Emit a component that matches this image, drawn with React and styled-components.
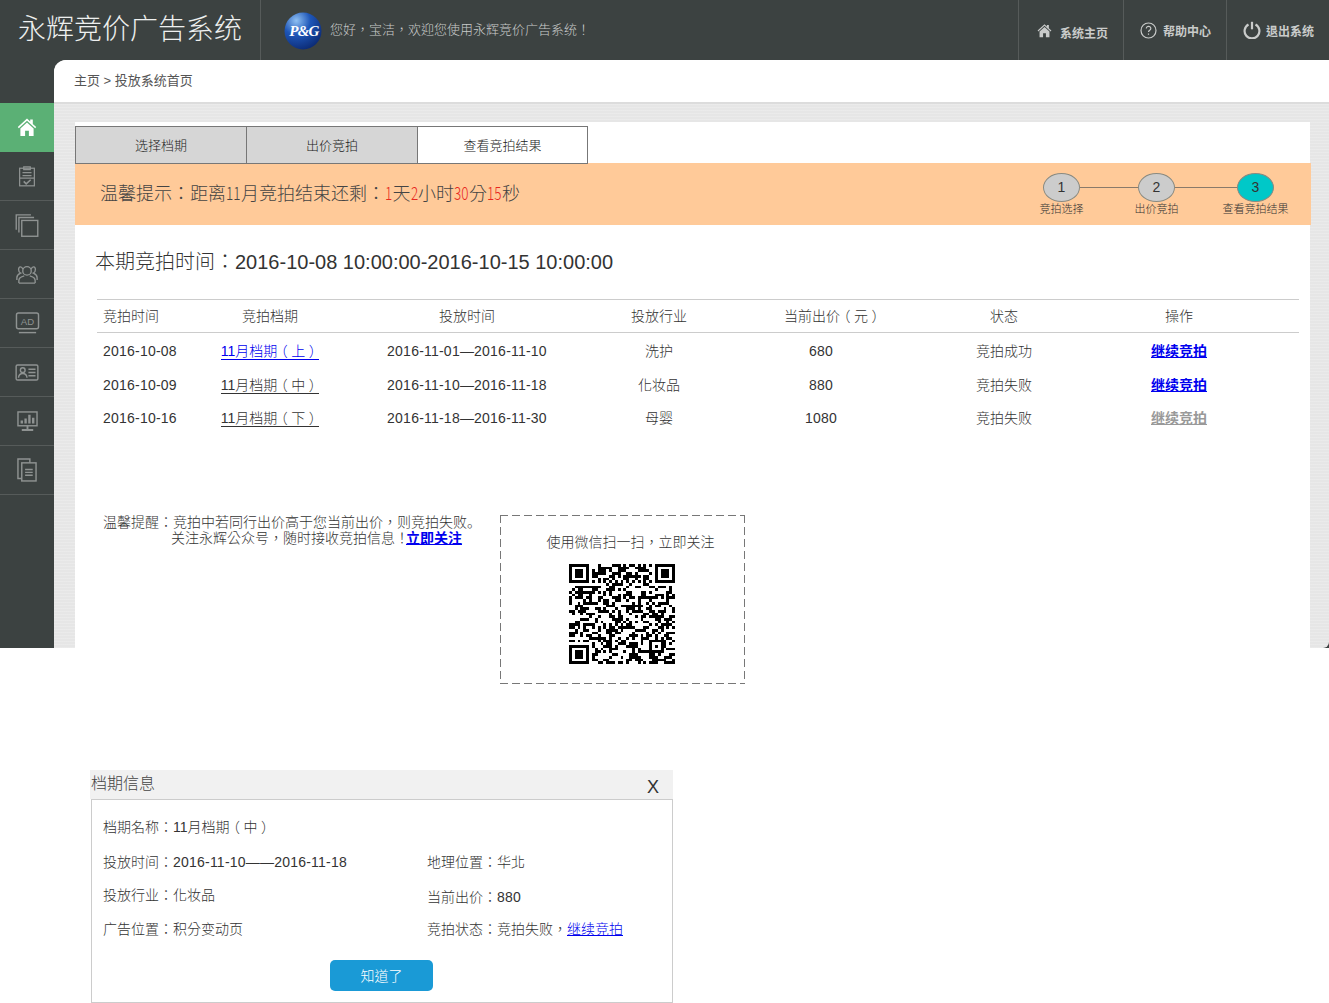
import React from "react";
import styled, { createGlobalStyle } from "styled-components";

const cjk = `"Liberation Sans", "Noto Sans CJK TC", "Noto Sans CJK SC", sans-serif`;

const GlobalStyle = createGlobalStyle`
  html, body {
    margin: 0;
    padding: 0;
    background: #fff;
  }
  body {
    font-family: ${cjk};
    font-size: 14px;
    font-weight: 300;
    color: #333;
  }
  * {
    box-sizing: border-box;
  }
`;

const Page = styled.div`
  width: 1329px;
  height: 1003px;
  overflow: hidden;
`;

const Shell = styled.div`
  height: 648px;
  background: #3c4241;
  display: flex;
  flex-direction: column;
`;

const Header = styled.header`
  height: 60px;
  flex: none;
  display: flex;
  align-items: stretch;
  color: #d4d6d5;
`;

const Brand = styled.div`
  width: 261px;
  padding-left: 18px;
  font-size: 28px;
  line-height: 59px;
  color: #eef0ef;
  border-right: 1px solid #565b5a;
`;

const Welcome = styled.div`
  flex: 1;
  display: flex;
  align-items: center;
  gap: 8px;
  padding: 2px 0 0 23px;
  font-size: 13px;
  color: #c9cbca;
`;

const WelcomeText = styled.span`
  margin-top: -5px;
`;

const HeaderLink = styled.a`
  width: ${(p) => p.$w}px;
  display: flex;
  align-items: center;
  gap: ${(p) => p.$gap}px;
  padding-left: ${(p) => p.$pad}px;
  border-left: 1px solid #565b5a;
  font-size: 12px;
  font-weight: 700;
  color: #c9cbca;
  span {
    position: relative;
    top: ${(p) => p.$drop || 0}px;
  }
`;

const Body = styled.div`
  flex: 1;
  display: flex;
  min-height: 0;
`;

const Sidebar = styled.nav`
  width: 54px;
  flex: none;
  padding-top: 43px;
`;

const SideItem = styled.div`
  height: 49px;
  display: flex;
  align-items: center;
  justify-content: center;
  background: ${(p) => (p.$active ? "#5bb075" : "transparent")};
  border-bottom: 1px solid ${(p) => (p.$active ? "#5bb075" : "#565b5a")};
  color: ${(p) => (p.$active ? "#fff" : "#8f9392")};
`;

const Main = styled.main`
  flex: 1;
  display: flex;
  flex-direction: column;
  min-width: 0;
  border-radius: 12px 0 6px 0;
  background-color: #e6e6e6;
  background-image: repeating-linear-gradient(0deg, rgba(255, 255, 255, 0.18) 0 1px, transparent 1px 3px);
`;

const Crumb = styled.div`
  height: 44px;
  flex: none;
  padding-left: 20px;
  background: #fff;
  border-radius: 12px 0 0 0;
  border-bottom: 2px solid #dcdcdc;
  font-size: 13px;
  line-height: 41px;
  color: #555;
  font-weight: 400;
`;

const Card = styled.section`
  flex: 1;
  margin: 18px 19px 0 21px;
  padding-top: 4px;
  background: #fff;
`;

const Tabs = styled.div`
  display: flex;
  position: relative;
  z-index: 1;
`;

const Tab = styled.div`
  width: 171px;
  height: 38px;
  background: ${(p) => (p.$active ? "#fff" : "#d6d6d6")};
  border: 1px solid #777;
  border-right-width: ${(p) => (p.$active ? 1 : 0)}px;
  text-align: center;
  font-size: 13px;
  line-height: 38px;
  color: #222;
`;

const Banner = styled.div`
  height: 62px;
  margin-top: -1px;
  margin-right: -1px;
  padding: 0 22px 0 25px;
  background: #ffca99;
  display: flex;
  align-items: center;
  justify-content: space-between;
`;

const Countdown = styled.div`
  font-size: 18px;
  color: #444;
  position: relative;
  top: -2px;
`;

// the digits in this line are much narrower than the font's own
const Digits = styled.span`
  display: inline-block;
  width: ${(p) => p.children.length * 7.5}px;
  transform: scaleX(0.75);
  transform-origin: left center;
  font-family: "Noto Sans CJK TC", sans-serif;
  color: ${(p) => (p.$red ? "#e8281e" : "inherit")};
`;

const Steps = styled.div`
  display: grid;
  grid-template-columns: 37px 58px 37px 62px 37px;
  grid-template-rows: 29px 14px;
  margin-right: 15px;
`;

const StepDot = styled.div`
  border: 1px solid #8a8a80;
  border-radius: 50%;
  background: ${(p) => (p.$on ? "#00c8c8" : "#ccc")};
  text-align: center;
  font-size: 14px;
  line-height: 27px;
  color: #333;
`;

const StepLine = styled.div`
  height: 1px;
  align-self: center;
  background: #8a7a6a;
`;

const StepLabel = styled.div`
  grid-row: 2;
  grid-column: ${(p) => p.$col};
  justify-self: center;
  white-space: nowrap;
  font-size: 11px;
  line-height: 14px;
  color: #333;
`;

const Content = styled.div`
  padding: 0 11px 0 20px;
`;

const PeriodTitle = styled.h2`
  margin: 23px 0 23px;
  font-size: 20px;
  font-weight: 300;
  line-height: 28px;
  color: #333;
`;

const Table = styled.div`
  margin-left: 2px;
  border-top: 1px solid #ccc;
`;

const Row = styled.div`
  display: grid;
  grid-template-columns: 73px 200px 194px 190px 158px 184px 166px 37px;
  align-items: center;
  height: ${(p) => (p.$head ? "33px" : "100%")};
  border-bottom: ${(p) => (p.$head ? "1px solid #ccc" : "none")};
  text-align: center;
  font-size: 14px;
  color: #333;
`;

const Cell = styled.div`
  white-space: nowrap;
  padding-bottom: ${(p) => (p.$up ? 2 : 0)}px;
  ${(p) => p.$left && "grid-column: 1; padding-left: 6px; text-align: left;"}
  ${(p) => p.$shift && "padding-right: 24px;"}
`;

const Rows = styled.div`
  display: grid;
  grid-template-rows: 34px 34px 32px;
  padding-top: 1px;
`;

const Num = styled.span`
  letter-spacing: 0.22px;
`;

// full-width brackets sit centred in their em box in the reference:
// halt gives the half-width glyph, the padding fills the rest of the em
const Bracket = styled.span`
  font-feature-settings: "halt";
  padding: 0 3.5px;
`;

const SlotLink = styled.a`
  color: ${(p) => p.$color};
  border-bottom: 1px solid ${(p) => p.$color};
`;

const PlainLink = styled.a`
  color: #0000ee;
  text-decoration: underline;
`;

const ActionLink = styled.a`
  color: ${(p) => (p.$off ? "#999" : "#0000ee")};
  font-weight: 700;
  text-decoration: underline;
`;

const Bottom = styled.div`
  display: flex;
  align-items: flex-start;
  margin-top: 81px;
`;

const Reminder = styled.div`
  width: 405px;
  margin-top: -2px;
  padding: 0 0 0 8px;
  line-height: 16px;
  font-size: 14px;
  color: #333;
  p {
    margin: 0;
  }
  p + p {
    padding-left: 68px;
  }
  a {
    margin-left: -3px;
    color: #0000ee;
    font-weight: 700;
    text-decoration: underline;
  }
`;

const FullStop = styled.span`
  font-family: "Noto Sans CJK SC", sans-serif;
`;

const QrBox = styled.div`
  width: 245px;
  height: 169px;
  padding-top: 18px;
  font-size: 14px;
  line-height: 18px;
  color: #333;
  text-align: center;
  background:
    linear-gradient(90deg, #777 8px, transparent 8px) top left / 12px 1px repeat-x,
    linear-gradient(90deg, #777 8px, transparent 8px) bottom left / 12px 1px repeat-x,
    linear-gradient(180deg, #777 8px, transparent 8px) top left / 1px 12px repeat-y,
    linear-gradient(180deg, #777 8px, transparent 8px) top right / 1px 12px repeat-y;
`;

const QrTitle = styled.div`
  padding-left: 16px;
`;

const QrImage = styled.svg`
  display: block;
  width: 106px;
  height: 100px;
  margin: 13px 0 0 69px;
  shape-rendering: crispEdges;
`;

const Dialog = styled.section`
  margin: 122px 0 0 90px;
  width: 583px;
`;

const DialogBar = styled.div`
  height: 29px;
  background: #f1f1f1;
  display: flex;
  justify-content: space-between;
  padding: 0 14px 0 1px;
  font-size: 16px;
  line-height: 27px;
  color: #444;
`;

const CloseMark = styled.span`
  font-size: 18px;
  line-height: 34px;
  color: #333;
`;

const DialogBody = styled.div`
  height: 204px;
  margin-left: 1px;
  border: 1px solid #ccc;
  padding: 9px 10px 0 11px;
`;

const InfoGrid = styled.div`
  display: grid;
  grid-template-columns: 324px 1fr;
  grid-template-rows: 34px 35px 32px 35px;
  align-items: center;
  font-size: 14px;
  color: #333;
`;

const InfoCell = styled.div`
  white-space: nowrap;
  position: relative;
  top: ${(p) => p.$nudge || 0}px;
`;

const OkButton = styled.button`
  display: block;
  width: 103px;
  height: 31px;
  margin: 15px 0 0 227px;
  padding: 0 0 2px;
  border: none;
  border-radius: 5px;
  background: #1a9ad6;
  color: #fff;
  font-family: inherit;
  font-weight: 300;
  font-size: 14px;
`;

const Line = { fill: "none", stroke: "currentColor", strokeWidth: 1.5 };

const HomeIcon = ({ size = 20 }) => (
  <svg width={size} height={size} viewBox="0 0 20 20" fill="currentColor">
    <path d="M10 1.5 0.8 10l1 1.2L10 3.7l8.2 7.5 1-1.2-3.4-3.1V2.5h-2.6v2z" />
    <path d="M10 5.4 3.4 11.4V19h4.7v-5.2h3.8V19h4.7v-7.6z" />
  </svg>
);

const ClipboardIcon = () => (
  <svg width="18" height="24" viewBox="0 0 22 26" {...Line}>
    <rect x="2" y="3.5" width="18" height="21.5" />
    <path d="M7 3.5V1.8h8v1.7M7 3.5v1.6h8V3.5M5.5 9h11M5.5 12.5h11M2 15.5h18" />
    <path d="M7 19.6l3 3 5.5-5" strokeWidth="2" />
  </svg>
);

const CopiesIcon = () => (
  <svg width="24" height="23" viewBox="0 0 25 25" {...Line}>
    <path d="M.8 17V1h16" />
    <path d="M3.7 20V3.8h16.5" />
    <rect x="6.8" y="7" width="17.4" height="17.2" />
  </svg>
);

const UsersIcon = () => (
  <svg width="22" height="19" viewBox="0 0 24 21" {...Line}>
    <circle cx="12" cy="6.5" r="4.7" />
    <path d="M3 20v-3c0-3 4-4.5 6-5M21 20v-3c0-3-4-4.5-6-5M3 20h18" />
    <path d="M7.5 4.6C6 1 2.8 1.5 2.7 5c0 2 1 3.5 2.3 4C3 10 .8 11 .8 14v2.5" />
    <path d="M16.5 4.6C18 1 21.2 1.5 21.3 5c0 2-1 3.5-2.3 4 2 1 4.2 2 4.2 5v2.5" />
  </svg>
);

const AdIcon = () => (
  <svg width="25" height="23" viewBox="0 0 25 24" {...Line}>
    <rect x="1" y="1" width="23" height="16.5" rx="2" />
    <path d="M3.5 21.5h18" />
    <text x="12.5" y="13.3" textAnchor="middle" fontSize="10" fill="currentColor" stroke="none" fontFamily="Liberation Sans">AD</text>
  </svg>
);

const CardIcon = () => (
  <svg width="24" height="17" viewBox="0 0 25 18" {...Line}>
    <rect x="1" y="1" width="23" height="16" rx="1.5" />
    <circle cx="8" cy="6.5" r="2.5" />
    <path d="M3.5 14.5c.3-3.5 2-4.5 4.5-4.5s4.2 1 4.5 4.5M14 5.5h7.5M14 9h7.5M14 12.5h7.5" />
  </svg>
);

const ChartIcon = () => (
  <svg width="21" height="20" viewBox="0 0 22 21" fill="none" stroke="currentColor" strokeWidth="1.5">
    <rect x="1" y="1" width="20" height="14.5" />
    <path d="M8 20h6M11 15.5V20M5 20h12" strokeWidth="2" />
    <path d="M5 13v-3M9 13V8M13 13V4M17 13V7" strokeWidth="2.5" />
  </svg>
);

const FilesIcon = () => (
  <svg width="20" height="24" viewBox="0 0 21 25" {...Line}>
    <path d="M5 21.5H1V1h12.5v4" />
    <rect x="5" y="5" width="15" height="19" />
    <path d="M8.5 12h8M8.5 15h8M8.5 18h8" />
  </svg>
);

const PgLogo = () => (
  <svg width="38" height="38" viewBox="0 0 38 38">
    <defs>
      <radialGradient id="pgBall" cx="0.32" cy="0.22" r="0.95">
        <stop offset="0" stopColor="#8fc0f2" />
        <stop offset="0.4" stopColor="#1e56b8" />
        <stop offset="1" stopColor="#071f63" />
      </radialGradient>
    </defs>
    <circle cx="19" cy="19" r="18.5" fill="url(#pgBall)" />
    <text x="20" y="24" textAnchor="middle" fontSize="15" fontWeight="700" fontStyle="italic" fontFamily="Liberation Serif" letterSpacing="-0.8" fill="#fff">P&amp;G</text>
  </svg>
);

// version 5 sized code: fixed patterns are real, the data modules are filler
const QR_SIZE = 37;

const buildQr = () => {
  let seed = 20161008;
  const next = () => {
    seed = (seed * 1664525 + 1013904223) >>> 0;
    return seed >>> 16;
  };
  const grid = [];
  for (let y = 0; y < QR_SIZE; y++) {
    const row = [];
    for (let x = 0; x < QR_SIZE; x++) {
      row.push(next() % 100 < 48);
    }
    grid.push(row);
  }
  // timing lines
  for (let i = 8; i < QR_SIZE - 8; i++) {
    grid[6][i] = i % 2 === 0;
    grid[i][6] = i % 2 === 0;
  }
  const finder = (ox, oy) => {
    for (let y = -1; y <= 7; y++) {
      for (let x = -1; x <= 7; x++) {
        const cy = oy + y;
        const cx = ox + x;
        if (cy < 0 || cx < 0 || cy >= QR_SIZE || cx >= QR_SIZE) continue;
        const inside = x >= 0 && x <= 6 && y >= 0 && y <= 6;
        const ring = x === 0 || x === 6 || y === 0 || y === 6;
        const core = x >= 2 && x <= 4 && y >= 2 && y <= 4;
        grid[cy][cx] = inside && (ring || core);
      }
    }
  };
  finder(0, 0);
  finder(QR_SIZE - 7, 0);
  finder(0, QR_SIZE - 7);
  for (let y = -2; y <= 2; y++) {
    for (let x = -2; x <= 2; x++) {
      grid[30 + y][30 + x] = Math.max(Math.abs(x), Math.abs(y)) !== 1;
    }
  }
  return grid;
};

const qrGrid = buildQr();

const QrCode = () => (
  <QrImage viewBox={`0 0 ${QR_SIZE} ${QR_SIZE}`} preserveAspectRatio="none">
    {qrGrid.flatMap((row, y) =>
      row.map((on, x) => (on ? <rect key={`${x}-${y}`} x={x} y={y} width="1" height="1" fill="#000" /> : null))
    )}
  </QrImage>
);

const Paren = ({ children }) => (
  <>
    <Bracket>（</Bracket>
    {children}
    <Bracket>）</Bracket>
  </>
);

const sideIcons = [ClipboardIcon, CopiesIcon, UsersIcon, AdIcon, CardIcon, ChartIcon, FilesIcon];

const bids = [
  { date: "2016-10-08", slot: "上", color: "#0000ee", span: "2016-11-01—2016-11-10", trade: "洗护", price: "680", state: "竞拍成功" },
  { date: "2016-10-09", slot: "中", color: "#333", span: "2016-11-10—2016-11-18", trade: "化妆品", price: "880", state: "竞拍失败" },
  { date: "2016-10-16", slot: "下", color: "#333", span: "2016-11-18—2016-11-30", trade: "母婴", price: "1080", state: "竞拍失败", off: true },
];

export default function App() {
  return (
    <Page>
      <GlobalStyle />
      <Shell>
        <Header>
          <Brand>永辉竞价广告系统</Brand>
          <Welcome>
            <PgLogo />
            <WelcomeText>您好，宝洁，欢迎您使用永辉竞价广告系统！</WelcomeText>
          </Welcome>
          <HeaderLink $w={105} $pad={18} $gap={8} $drop={2}>
            <HomeIcon size={15} />
            <span>系统主页</span>
          </HeaderLink>
          <HeaderLink $w={103} $pad={16} $gap={6}>
            <svg width="17" height="17" viewBox="0 0 17 17" fill="none" stroke="currentColor" strokeWidth="1.2">
              <circle cx="8.5" cy="8.5" r="7.5" />
              <path d="M6.3 6.5c0-3 4.6-2.8 4.5 0 0 1.8-2.3 1.8-2.3 3.6" />
              <path d="M8.5 11.5v1.3" />
            </svg>
            <span>帮助中心</span>
          </HeaderLink>
          <HeaderLink $w={103} $pad={16} $gap={5}>
            <svg width="18" height="18" viewBox="0 0 18 18" fill="none" stroke="currentColor" strokeWidth="2.2">
              <path d="M5.5 3.5a7.4 7.4 0 1 0 7 0" />
              <path d="M9 .8v7.5" />
            </svg>
            <span>退出系统</span>
          </HeaderLink>
        </Header>
        <Body>
          <Sidebar>
            <SideItem $active>
              <HomeIcon />
            </SideItem>
            {sideIcons.map((Icon, i) => (
              <SideItem key={i}>
                <Icon />
              </SideItem>
            ))}
          </Sidebar>
          <Main>
            <Crumb>主页 &gt; 投放系统首页</Crumb>
            <Card>
              <Tabs>
                <Tab>选择档期</Tab>
                <Tab>出价竞拍</Tab>
                <Tab $active>查看竞拍结果</Tab>
              </Tabs>
              <Banner>
                <Countdown>
                  温馨提示：距离<Digits>11</Digits>月竞拍结束还剩：<Digits $red>1</Digits>天<Digits $red>2</Digits>小时
                  <Digits $red>30</Digits>分<Digits $red>15</Digits>秒
                </Countdown>
                <Steps>
                  <StepDot>1</StepDot>
                  <StepLine />
                  <StepDot>2</StepDot>
                  <StepLine />
                  <StepDot $on>3</StepDot>
                  <StepLabel $col={1}>竞拍选择</StepLabel>
                  <StepLabel $col={3}>出价竞拍</StepLabel>
                  <StepLabel $col={5}>查看竞拍结果</StepLabel>
                </Steps>
              </Banner>
              <Content>
                <PeriodTitle>本期竞拍时间：2016-10-08 10:00:00-2016-10-15 10:00:00</PeriodTitle>
                <Table>
                  <Row $head>
                    <Cell $left $up>竞拍时间</Cell>
                    <Cell $up>竞拍档期</Cell>
                    <Cell $up>投放时间</Cell>
                    <Cell $up>投放行业</Cell>
                    <Cell $up>当前出价<Paren>元</Paren></Cell>
                    <Cell $up>状态</Cell>
                    <Cell $up>操作</Cell>
                  </Row>
                  <Rows>
                    {bids.map((b) => (
                      <Row key={b.date}>
                        <Cell $left><Num>{b.date}</Num></Cell>
                        <Cell $up>
                          <SlotLink $color={b.color}>11月档期<Paren>{b.slot}</Paren></SlotLink>
                        </Cell>
                        <Cell><Num>{b.span}</Num></Cell>
                        <Cell $up>{b.trade}</Cell>
                        <Cell $shift><Num>{b.price}</Num></Cell>
                        <Cell $up>{b.state}</Cell>
                        <Cell $up>
                          <ActionLink $off={b.off}>继续竞拍</ActionLink>
                        </Cell>
                      </Row>
                    ))}
                  </Rows>
                </Table>
                <Bottom>
                  <Reminder>
                    <p>温馨提醒：竞拍中若同行出价高于您当前出价，则竞拍失败<FullStop>。</FullStop></p>
                    <p>
                      关注永辉公众号，随时接收竞拍信息！<a>立即关注</a>
                    </p>
                  </Reminder>
                  <QrBox>
                    <QrTitle>使用微信扫一扫，立即关注</QrTitle>
                    <QrCode />
                  </QrBox>
                </Bottom>
              </Content>
            </Card>
          </Main>
        </Body>
      </Shell>
      <Dialog>
        <DialogBar>
          档期信息
          <CloseMark>X</CloseMark>
        </DialogBar>
        <DialogBody>
          <InfoGrid>
            <InfoCell>档期名称：11月档期<Paren>中</Paren></InfoCell>
            <InfoCell />
            <InfoCell>投放时间：<Num>2016-11-10——2016-11-18</Num></InfoCell>
            <InfoCell>地理位置：华北</InfoCell>
            <InfoCell>投放行业：化妆品</InfoCell>
            <InfoCell $nudge={2}>当前出价：<Num>880</Num></InfoCell>
            <InfoCell>广告位置：积分变动页</InfoCell>
            <InfoCell>
              竞拍状态：竞拍失败，<PlainLink>继续竞拍</PlainLink>
            </InfoCell>
          </InfoGrid>
          <OkButton>知道了</OkButton>
        </DialogBody>
      </Dialog>
    </Page>
  );
}
